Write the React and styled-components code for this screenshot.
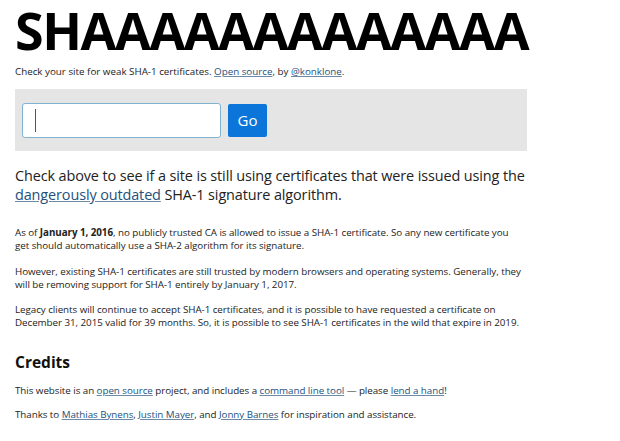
import React from "react";
import styled, { createGlobalStyle } from "styled-components";

const GlobalStyle = createGlobalStyle`
  html, body {
    margin: 0;
    padding: 0;
    background: #fff;
  }
  body {
    font-family: "Open Sans", "Noto Sans", sans-serif;
    color: #222;
  }
`;

const Page = styled.main`
  width: 512px;
  padding: 0 15px;
`;

const Title = styled.h1`
  margin: 0;
  padding-top: 2px;
  font-size: 52px;
  font-weight: 700;
  line-height: 56px;
  letter-spacing: -1.45px;
  color: #000;
  white-space: nowrap;
`;

const Tagline = styled.p`
  margin: 6px 0 0;
  font-size: 9.8px;
  line-height: 16px;
  color: #222;
`;

const Link = styled.a`
  color: #23507c;
  text-decoration: underline;
  text-decoration-color: #6f8aa6;
`;

const SearchBar = styled.form`
  margin-top: 9px;
  height: 62px;
  background: #e5e5e5;
  display: flex;
  align-items: center;
  gap: 7px;
  padding: 0 7px;
`;

const InputWrap = styled.div`
  position: relative;
  display: flex;
`;

const Field = styled.input`
  box-sizing: border-box;
  width: 199px;
  height: 35px;
  border: 1px solid #7fb3d0;
  border-radius: 3px;
  background: #fff;
  outline: none;
  padding: 0 12px;
  font-family: inherit;
  font-size: 14px;
`;

const Caret = styled.span`
  position: absolute;
  left: 13px;
  top: 6px;
  width: 1px;
  height: 23px;
  background: #555;
`;

const GoButton = styled.button`
  height: 33px;
  width: 39px;
  border: none;
  border-radius: 2px;
  background: #0b75da;
  color: #fff;
  font-family: inherit;
  font-size: 15px;
  cursor: pointer;
`;

const Lead = styled.p`
  margin: 15px 0 0;
  font-size: 14.45px;
  line-height: 19px;
  letter-spacing: -0.12px;
  color: #222;
`;

const Para = styled.p`
  margin: ${(p) => p.$top ?? 12.5}px 0 0;
  max-width: 507.5px;
  font-size: 9.8px;
  line-height: 13px;
  letter-spacing: -0.05px;
  color: #222;
`;

const Heading = styled.h2`
  margin: 22.5px 0 0;
  font-size: 15.5px;
  font-weight: 700;
  line-height: 20px;
  color: #111;
`;

const App = () => {
  return (
    <>
      <GlobalStyle />
      <Page>
        <Title>SHAAAAAAAAAAAAA</Title>
        <Tagline>
          Check your site for weak SHA-1 certificates.{" "}
          <Link href="#">Open source</Link>, by <Link href="#">@konklone</Link>.
        </Tagline>

        <SearchBar onSubmit={(e) => e.preventDefault()}>
          <InputWrap>
            <Field type="text" />
            <Caret />
          </InputWrap>
          <GoButton type="submit">Go</GoButton>
        </SearchBar>

        <Lead>
          Check above to see if a site is still using certificates that were
          issued using the <Link href="#">dangerously outdated</Link> SHA-1
          signature algorithm.
        </Lead>

        <Para $top={22}>
          As of <strong>January 1, 2016</strong>, no publicly trusted CA is
          allowed to issue a SHA-1 certificate. So any new certificate you get
          should automatically use a SHA-2 algorithm for its signature.
        </Para>
        <Para>
          However, existing SHA-1 certificates are still trusted by modern
          browsers and operating systems. Generally, they will be removing
          support for SHA-1 entirely by January 1, 2017.
        </Para>
        <Para>
          Legacy clients will continue to accept SHA-1 certificates, and it is
          possible to have requested a certificate on December 31, 2015 valid
          for 39 months. So, it is possible to see SHA-1 certificates in the
          wild that expire in 2019.
        </Para>

        <Heading>Credits</Heading>
        <Para $top={12.5}>
          This website is an <Link href="#">open source</Link> project, and
          includes a <Link href="#">command line tool</Link> — please{" "}
          <Link href="#">lend a hand</Link>!
        </Para>
        <Para $top={11}>
          Thanks to <Link href="#">Mathias Bynens</Link>,{" "}
          <Link href="#">Justin Mayer</Link>, and{" "}
          <Link href="#">Jonny Barnes</Link> for inspiration and assistance.
        </Para>
      </Page>
    </>
  );
};

export default App;
